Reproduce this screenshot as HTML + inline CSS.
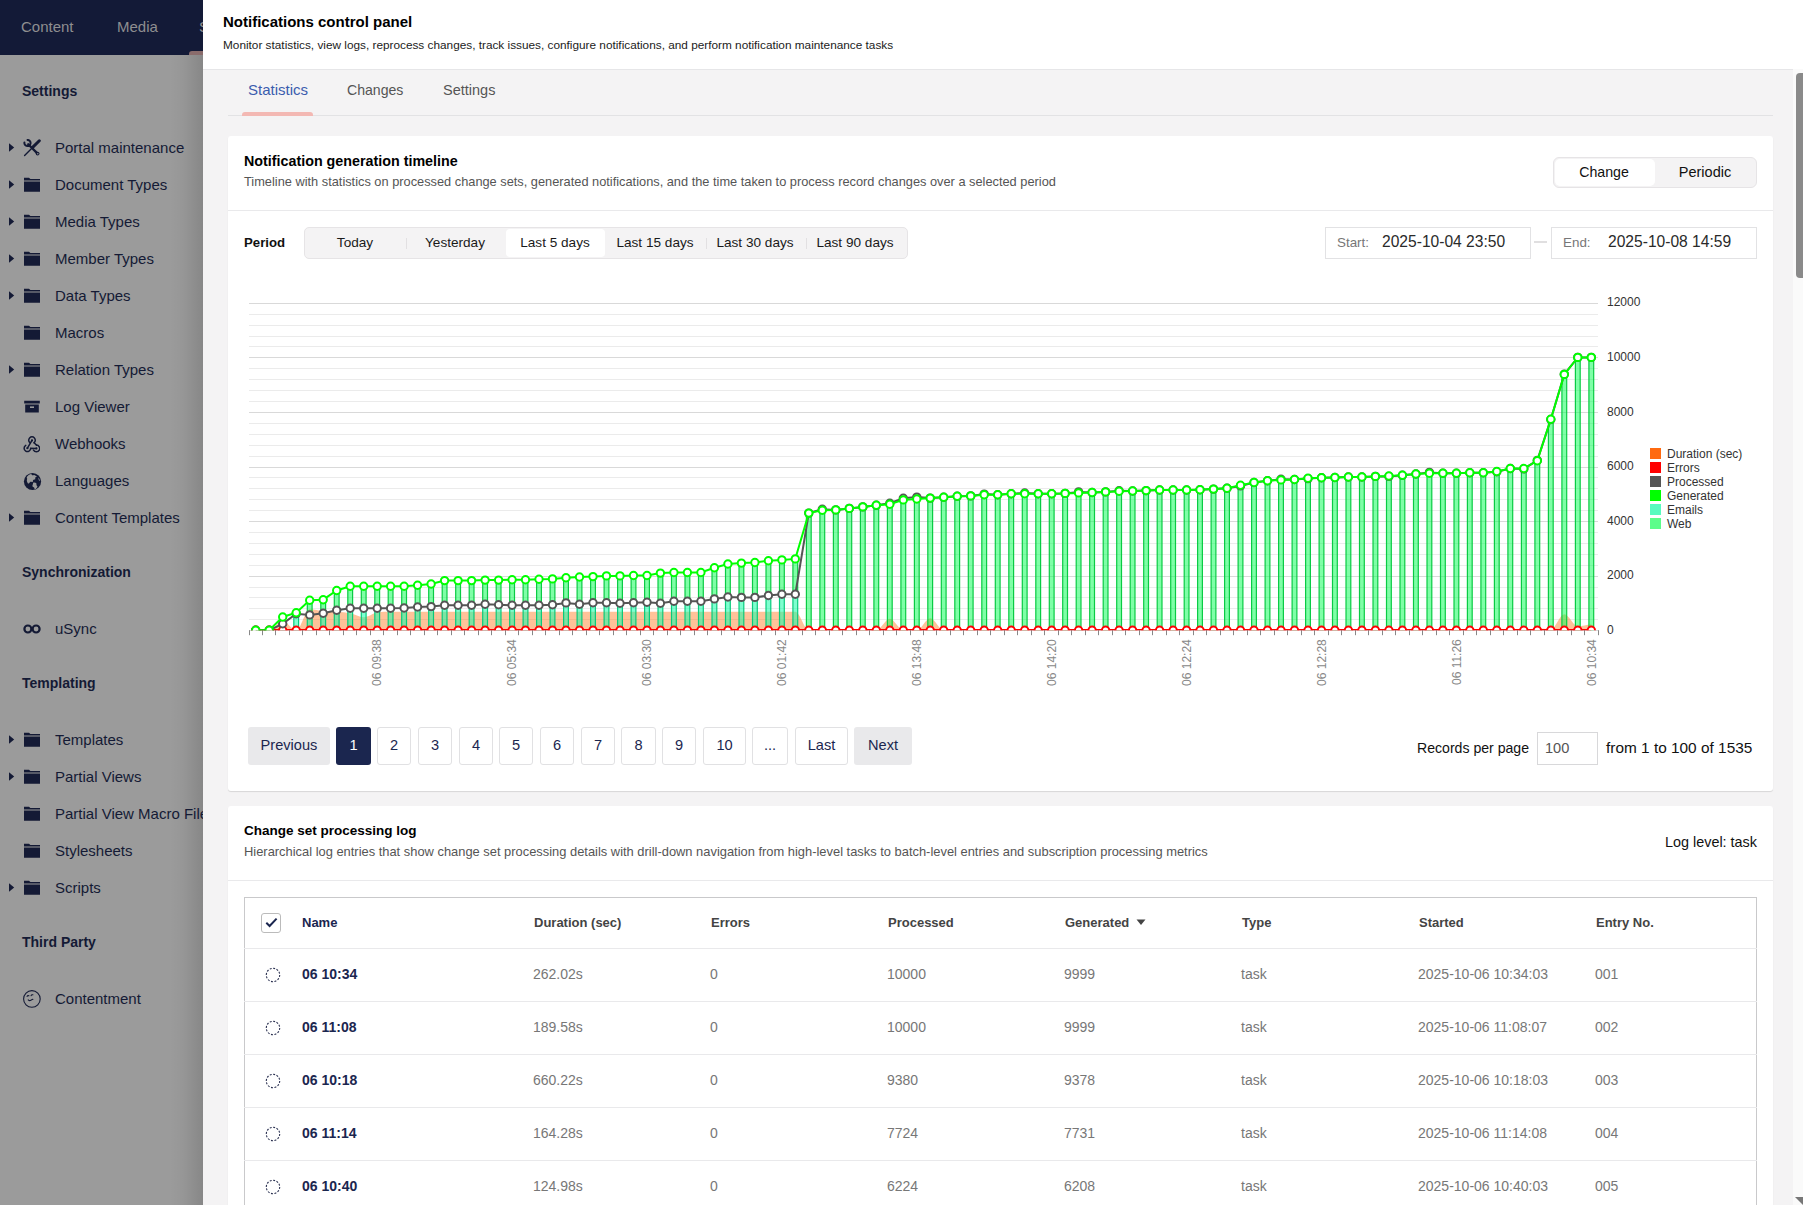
<!DOCTYPE html>
<html><head><meta charset="utf-8"><title>Notifications control panel</title>
<style>html,body{margin:0;padding:0;}body{width:1803px;height:1205px;overflow:hidden;position:relative;font-family:"Liberation Sans", sans-serif;background:#f4f3f4}</style>
</head><body>
<div style="position:absolute;left:0;top:0;width:203px;height:1205px;overflow:hidden"><div style="position:absolute;left:0px;top:0px;width:203px;height:1205px;background:#9b9b9b"></div><div style="position:absolute;left:170px;top:55px;width:33px;height:1150px;background:linear-gradient(to right, rgba(0,0,0,0) 0%, rgba(0,0,0,0.03) 40%, rgba(0,0,0,0.13) 100%)"></div><div style="position:absolute;left:0px;top:0px;width:203px;height:55px;background:#131a37"></div><div style="position:absolute;left:21px;top:17.0px;height:20px;line-height:20px;font-size:15px;color:#8e8e90;font-weight:400;white-space:nowrap;">Content</div><div style="position:absolute;left:117px;top:17.0px;height:20px;line-height:20px;font-size:15px;color:#8e8e90;font-weight:400;white-space:nowrap;">Media</div><div style="position:absolute;left:199px;top:17.0px;height:20px;line-height:20px;font-size:15px;color:#8e8e90;font-weight:400;white-space:nowrap;">Settings</div><div style="position:absolute;left:189px;top:51px;width:31px;height:4px;background:#8a6c6c;border-radius:3px 3px 0 0"></div><div style="position:absolute;left:22px;top:82.0px;height:18px;line-height:18px;font-size:14px;color:#141a35;font-weight:700;white-space:nowrap;">Settings</div><svg style="position:absolute;left:9px;top:142.5px" width="6" height="9"><path d="M0,0.3L5.2,4.5L0,8.7Z" fill="#141a35"/></svg><svg style="position:absolute;left:23px;top:139px" width="18" height="18" viewBox="0 0 18 18"><g stroke="#141a35" stroke-linecap="round" fill="none"><path d="M16.3,1.8L9.6,8.4" stroke-width="3"/><path d="M9.6,8.4L1.6,16.4" stroke-width="1.4"/><path d="M5.2,5.2L14.4,14.4" stroke-width="2.3"/><path d="M1.4,3.6A3.1,3.1 0 1 0 4.6,0.9" stroke-width="2"/></g><circle cx="14.6" cy="14.6" r="1.9" fill="#141a35"/><circle cx="14.8" cy="14.8" r="0.7" fill="#9b9b9b"/></svg><div style="position:absolute;left:55px;top:138.0px;height:20px;line-height:20px;font-size:15px;color:#141a35;font-weight:400;white-space:nowrap;">Portal maintenance</div><svg style="position:absolute;left:9px;top:179.5px" width="6" height="9"><path d="M0,0.3L5.2,4.5L0,8.7Z" fill="#141a35"/></svg><svg style="position:absolute;left:23px;top:177px" width="18" height="16" viewBox="0 0 18 16"><path d="M1,0.8h5l1.4,1.2h9.6v1.4H1z M1,4.6h16v10.2H1z" fill="#141a35"/></svg><div style="position:absolute;left:55px;top:175.0px;height:20px;line-height:20px;font-size:15px;color:#141a35;font-weight:400;white-space:nowrap;">Document Types</div><svg style="position:absolute;left:9px;top:216.5px" width="6" height="9"><path d="M0,0.3L5.2,4.5L0,8.7Z" fill="#141a35"/></svg><svg style="position:absolute;left:23px;top:214px" width="18" height="16" viewBox="0 0 18 16"><path d="M1,0.8h5l1.4,1.2h9.6v1.4H1z M1,4.6h16v10.2H1z" fill="#141a35"/></svg><div style="position:absolute;left:55px;top:212.0px;height:20px;line-height:20px;font-size:15px;color:#141a35;font-weight:400;white-space:nowrap;">Media Types</div><svg style="position:absolute;left:9px;top:253.5px" width="6" height="9"><path d="M0,0.3L5.2,4.5L0,8.7Z" fill="#141a35"/></svg><svg style="position:absolute;left:23px;top:251px" width="18" height="16" viewBox="0 0 18 16"><path d="M1,0.8h5l1.4,1.2h9.6v1.4H1z M1,4.6h16v10.2H1z" fill="#141a35"/></svg><div style="position:absolute;left:55px;top:249.0px;height:20px;line-height:20px;font-size:15px;color:#141a35;font-weight:400;white-space:nowrap;">Member Types</div><svg style="position:absolute;left:9px;top:290.5px" width="6" height="9"><path d="M0,0.3L5.2,4.5L0,8.7Z" fill="#141a35"/></svg><svg style="position:absolute;left:23px;top:288px" width="18" height="16" viewBox="0 0 18 16"><path d="M1,0.8h5l1.4,1.2h9.6v1.4H1z M1,4.6h16v10.2H1z" fill="#141a35"/></svg><div style="position:absolute;left:55px;top:286.0px;height:20px;line-height:20px;font-size:15px;color:#141a35;font-weight:400;white-space:nowrap;">Data Types</div><svg style="position:absolute;left:23px;top:325px" width="18" height="16" viewBox="0 0 18 16"><path d="M1,0.8h5l1.4,1.2h9.6v1.4H1z M1,4.6h16v10.2H1z" fill="#141a35"/></svg><div style="position:absolute;left:55px;top:323.0px;height:20px;line-height:20px;font-size:15px;color:#141a35;font-weight:400;white-space:nowrap;">Macros</div><svg style="position:absolute;left:9px;top:364.5px" width="6" height="9"><path d="M0,0.3L5.2,4.5L0,8.7Z" fill="#141a35"/></svg><svg style="position:absolute;left:23px;top:362px" width="18" height="16" viewBox="0 0 18 16"><path d="M1,0.8h5l1.4,1.2h9.6v1.4H1z M1,4.6h16v10.2H1z" fill="#141a35"/></svg><div style="position:absolute;left:55px;top:360.0px;height:20px;line-height:20px;font-size:15px;color:#141a35;font-weight:400;white-space:nowrap;">Relation Types</div><svg style="position:absolute;left:23px;top:399px" width="18" height="16" viewBox="0 0 18 16"><path d="M1.2,1.8h15.6v2.8H1.2z M2.2,5.6h13.6v7.8H2.2z" fill="#141a35"/><rect x="7" y="7.4" width="4" height="1.6" fill="#9b9b9b"/></svg><div style="position:absolute;left:55px;top:397.0px;height:20px;line-height:20px;font-size:15px;color:#141a35;font-weight:400;white-space:nowrap;">Log Viewer</div><svg style="position:absolute;left:22px;top:435.5px" width="18" height="18" viewBox="0 0 18 18"><g fill="none" stroke="#141a35" stroke-width="1.5" stroke-linecap="round"><path d="M12.1,6.7A3.3,3.3 0 1 0 7.9,6.7"/><path d="M10,4.4L5.4,12.2"/><path d="M12.1,6.7L14.4,9.1"/><path d="M3.75,9.34A3.3,3.3 0 1 0 8.7,12.2L14.4,12.4"/><path d="M14.4,9.1A3.3,3.3 0 1 1 11.54,14.05"/></g><circle cx="10" cy="4.4" r="1.1" fill="#141a35"/><circle cx="5.4" cy="12.2" r="1.1" fill="#141a35"/><circle cx="14.4" cy="12.4" r="1.1" fill="#141a35"/></svg><div style="position:absolute;left:55px;top:434.0px;height:20px;line-height:20px;font-size:15px;color:#141a35;font-weight:400;white-space:nowrap;">Webhooks</div><svg style="position:absolute;left:22.5px;top:472px" width="19" height="19" viewBox="0 0 19 19"><circle cx="9.5" cy="9.5" r="8.6" fill="#141a35"/><path d="M4.2,4.4c1.2,-1.2 2.6,-2 4,-2.3c0.6,0.3 0.4,1 1,1.2c0.8,0.1 1.2,-0.5 2,-0.4c1,0.4 2,0.9 2.7,1.7c-0.4,0.6 -1.2,0.4 -1.6,0.9c-0.4,0.5 0.3,1.2 -0.1,1.8c-0.5,0.6 -1.4,0.1 -2,0.6c-0.6,0.5 0.1,1.4 -0.5,1.9c-0.7,0.5 -1.8,-0.2 -2.6,0.2c-0.8,0.4 -0.6,1.5 -1.4,1.6c-0.9,0.1 -1.3,-1 -1.6,-1.8c-0.4,-1.1 -0.3,-2.2 0.1,-3c-0.5,-0.7 -0.6,-1.6 0,-2.4z M10.5,10.6c0.9,-0.4 2,-0.1 2.6,0.5c0.6,0.6 0.2,1.5 0.5,2.2c0.2,0.6 0.9,0.8 0.8,1.5c-0.5,1.1 -1.4,2.2 -2.6,2.8c-0.4,-0.6 -0.2,-1.5 -0.7,-2c-0.5,-0.6 -1.4,-0.6 -1.6,-1.4c-0.2,-0.8 0.2,-1.6 0.5,-2.3c0.1,-0.5 0,-1 0.5,-1.3z M15.6,5.6c0.7,1 1.2,2.2 1.3,3.4c-0.5,0 -1,-0.4 -1.1,-0.9c-0.2,-0.8 -0.5,-1.6 -0.2,-2.5z" fill="#9b9b9b"/></svg><div style="position:absolute;left:55px;top:471.0px;height:20px;line-height:20px;font-size:15px;color:#141a35;font-weight:400;white-space:nowrap;">Languages</div><svg style="position:absolute;left:9px;top:512.5px" width="6" height="9"><path d="M0,0.3L5.2,4.5L0,8.7Z" fill="#141a35"/></svg><svg style="position:absolute;left:23px;top:510px" width="18" height="16" viewBox="0 0 18 16"><path d="M1,0.8h5l1.4,1.2h9.6v1.4H1z M1,4.6h16v10.2H1z" fill="#141a35"/></svg><div style="position:absolute;left:55px;top:508.0px;height:20px;line-height:20px;font-size:15px;color:#141a35;font-weight:400;white-space:nowrap;">Content Templates</div><svg style="position:absolute;left:9px;top:734.5px" width="6" height="9"><path d="M0,0.3L5.2,4.5L0,8.7Z" fill="#141a35"/></svg><svg style="position:absolute;left:23px;top:732px" width="18" height="16" viewBox="0 0 18 16"><path d="M1,0.8h5l1.4,1.2h9.6v1.4H1z M1,4.6h16v10.2H1z" fill="#141a35"/></svg><div style="position:absolute;left:55px;top:730.0px;height:20px;line-height:20px;font-size:15px;color:#141a35;font-weight:400;white-space:nowrap;">Templates</div><svg style="position:absolute;left:9px;top:771.5px" width="6" height="9"><path d="M0,0.3L5.2,4.5L0,8.7Z" fill="#141a35"/></svg><svg style="position:absolute;left:23px;top:769px" width="18" height="16" viewBox="0 0 18 16"><path d="M1,0.8h5l1.4,1.2h9.6v1.4H1z M1,4.6h16v10.2H1z" fill="#141a35"/></svg><div style="position:absolute;left:55px;top:767.0px;height:20px;line-height:20px;font-size:15px;color:#141a35;font-weight:400;white-space:nowrap;">Partial Views</div><svg style="position:absolute;left:23px;top:806px" width="18" height="16" viewBox="0 0 18 16"><path d="M1,0.8h5l1.4,1.2h9.6v1.4H1z M1,4.6h16v10.2H1z" fill="#141a35"/></svg><div style="position:absolute;left:55px;top:804.0px;height:20px;line-height:20px;font-size:15px;color:#141a35;font-weight:400;white-space:nowrap;">Partial View Macro Files</div><svg style="position:absolute;left:23px;top:843px" width="18" height="16" viewBox="0 0 18 16"><path d="M1,0.8h5l1.4,1.2h9.6v1.4H1z M1,4.6h16v10.2H1z" fill="#141a35"/></svg><div style="position:absolute;left:55px;top:841.0px;height:20px;line-height:20px;font-size:15px;color:#141a35;font-weight:400;white-space:nowrap;">Stylesheets</div><svg style="position:absolute;left:9px;top:882.5px" width="6" height="9"><path d="M0,0.3L5.2,4.5L0,8.7Z" fill="#141a35"/></svg><svg style="position:absolute;left:23px;top:880px" width="18" height="16" viewBox="0 0 18 16"><path d="M1,0.8h5l1.4,1.2h9.6v1.4H1z M1,4.6h16v10.2H1z" fill="#141a35"/></svg><div style="position:absolute;left:55px;top:878.0px;height:20px;line-height:20px;font-size:15px;color:#141a35;font-weight:400;white-space:nowrap;">Scripts</div><div style="position:absolute;left:22px;top:563.0px;height:18px;line-height:18px;font-size:14px;color:#141a35;font-weight:700;white-space:nowrap;">Synchronization</div><svg style="position:absolute;left:22px;top:622.8px" width="20" height="12" viewBox="0 0 20 12"><g fill="none" stroke="#141a35" stroke-width="2.2"><circle cx="5.9" cy="6" r="3.5"/><circle cx="14.1" cy="6" r="3.5"/></g></svg><div style="position:absolute;left:55px;top:619.0px;height:20px;line-height:20px;font-size:15px;color:#141a35;font-weight:400;white-space:nowrap;">uSync</div><div style="position:absolute;left:22px;top:674.0px;height:18px;line-height:18px;font-size:14px;color:#141a35;font-weight:700;white-space:nowrap;">Templating</div><div style="position:absolute;left:22px;top:933.0px;height:18px;line-height:18px;font-size:14px;color:#141a35;font-weight:700;white-space:nowrap;">Third Party</div><svg style="position:absolute;left:23px;top:990px" width="18" height="18" viewBox="0 0 18 18"><g fill="none" stroke="#141a35" stroke-width="1.1" stroke-linecap="round"><circle cx="8.9" cy="8.9" r="8.3"/><path d="M5.2,9.8c0.8,0.8 1.6,1.1 2.3,0.6c0.7,-0.3 1.4,-0.8 2.4,-1.1"/><path d="M4.1,6.4c0.3,-0.7 1,-0.9 1.8,-0.6"/><path d="M8.1,5.6c0.2,-0.7 0.9,-1 1.8,-0.8"/></g></svg><div style="position:absolute;left:55px;top:989.0px;height:20px;line-height:20px;font-size:15px;color:#141a35;font-weight:400;white-space:nowrap;">Contentment</div></div>
<div style="position:absolute;left:203px;top:0px;width:1600px;height:1205px;background:#f4f3f4"></div><div style="position:absolute;left:203px;top:0px;width:1600px;height:69px;background:#fff;border-bottom:1px solid #e6e6e8"></div><div style="position:absolute;left:223px;top:11.6px;height:20px;line-height:20px;font-size:15px;color:#000;font-weight:700;white-space:nowrap;">Notifications control panel</div><div style="position:absolute;left:223px;top:37.5px;height:15px;line-height:15px;font-size:11.8px;color:#1b1b1b;font-weight:400;white-space:nowrap;">Monitor statistics, view logs, reprocess changes, track issues, configure notifications, and perform notification maintenance tasks</div><div style="position:absolute;left:248px;top:80.0px;height:20px;line-height:20px;font-size:15px;color:#3b5cae;font-weight:400;white-space:nowrap;">Statistics</div><div style="position:absolute;left:347px;top:81.0px;height:18px;line-height:18px;font-size:14.1px;color:#555;font-weight:400;white-space:nowrap;">Changes</div><div style="position:absolute;left:443px;top:80.5px;height:19px;line-height:19px;font-size:14.5px;color:#555;font-weight:400;white-space:nowrap;">Settings</div><div style="position:absolute;left:228px;top:115px;width:1545px;height:1px;background:#e2e2e4"></div><div style="position:absolute;left:242px;top:112px;width:71px;height:4px;background:#f3b8b3;border-radius:3px 3px 0 0"></div><div style="position:absolute;left:228px;top:136px;width:1545px;height:655px;background:#fff;border-radius:3px;box-shadow:0 1px 1px rgba(0,0,0,0.12)"></div><div style="position:absolute;left:244px;top:151.5px;height:19px;line-height:19px;font-size:14.3px;color:#000;font-weight:700;white-space:nowrap;">Notification generation timeline</div><div style="position:absolute;left:244px;top:172.5px;height:17px;line-height:17px;font-size:12.8px;color:#555;font-weight:400;white-space:nowrap;">Timeline with statistics on processed change sets, generated notifications, and the time taken to process record changes over a selected period</div><div style="position:absolute;left:228px;top:210px;width:1545px;height:1px;background:#e9e9eb"></div><div style="position:absolute;left:1553px;top:157px;width:204px;height:31px;background:#f4f3f4;border:1px solid #e6e4e6;border-radius:6px;box-sizing:border-box"></div><div style="position:absolute;left:1555px;top:159px;width:100px;height:27px;background:#fff;border-radius:5px"></div><div style="position:absolute;left:1604px;transform:translateX(-50%);top:163.0px;height:18px;line-height:18px;font-size:14.2px;color:#111;font-weight:400;white-space:nowrap;">Change</div><div style="position:absolute;left:1705px;transform:translateX(-50%);top:162.5px;height:19px;line-height:19px;font-size:14.5px;color:#111;font-weight:400;white-space:nowrap;">Periodic</div><div style="position:absolute;left:244px;top:233.5px;height:17px;line-height:17px;font-size:13.2px;color:#111;font-weight:700;white-space:nowrap;">Period</div><div style="position:absolute;left:304px;top:227px;width:604px;height:32px;background:#f4f3f4;border:1px solid #e6e4e6;border-radius:5px;box-sizing:border-box"></div><div style="position:absolute;left:506px;top:229px;width:99px;height:28px;background:#fff;border-radius:4px"></div><div style="position:absolute;left:355px;transform:translateX(-50%);top:233.8px;height:18px;line-height:18px;font-size:13.6px;color:#1a1a1a;font-weight:400;white-space:nowrap;">Today</div><div style="position:absolute;left:455px;transform:translateX(-50%);top:233.8px;height:18px;line-height:18px;font-size:13.6px;color:#1a1a1a;font-weight:400;white-space:nowrap;">Yesterday</div><div style="position:absolute;left:555px;transform:translateX(-50%);top:233.8px;height:18px;line-height:18px;font-size:13.6px;color:#1a1a1a;font-weight:400;white-space:nowrap;">Last 5 days</div><div style="position:absolute;left:655px;transform:translateX(-50%);top:233.8px;height:18px;line-height:18px;font-size:13.6px;color:#1a1a1a;font-weight:400;white-space:nowrap;">Last 15 days</div><div style="position:absolute;left:755px;transform:translateX(-50%);top:233.8px;height:18px;line-height:18px;font-size:13.6px;color:#1a1a1a;font-weight:400;white-space:nowrap;">Last 30 days</div><div style="position:absolute;left:855px;transform:translateX(-50%);top:233.8px;height:18px;line-height:18px;font-size:13.6px;color:#1a1a1a;font-weight:400;white-space:nowrap;">Last 90 days</div><div style="position:absolute;left:406px;top:238px;width:1px;height:11px;background:#e2e0e2"></div><div style="position:absolute;left:706px;top:238px;width:1px;height:11px;background:#e2e0e2"></div><div style="position:absolute;left:806px;top:238px;width:1px;height:11px;background:#e2e0e2"></div><div style="position:absolute;left:1325px;top:227px;width:206px;height:32px;background:#fff;border:1px solid #e2e2e4;box-sizing:border-box"></div><div style="position:absolute;left:1337px;top:233.5px;height:17px;line-height:17px;font-size:13.4px;color:#777;font-weight:400;white-space:nowrap;">Start:</div><div style="position:absolute;left:1382px;top:232.0px;height:20px;line-height:20px;font-size:15.6px;color:#2a2a2a;font-weight:400;white-space:nowrap;">2025-10-04 23:50</div><div style="position:absolute;left:1534px;top:241px;width:13px;height:2px;background:#e0dfe0"></div><div style="position:absolute;left:1551px;top:227px;width:206px;height:32px;background:#fff;border:1px solid #e2e2e4;box-sizing:border-box"></div><div style="position:absolute;left:1563px;top:233.5px;height:17px;line-height:17px;font-size:13.4px;color:#777;font-weight:400;white-space:nowrap;">End:</div><div style="position:absolute;left:1608px;top:232.0px;height:20px;line-height:20px;font-size:15.6px;color:#2a2a2a;font-weight:400;white-space:nowrap;">2025-10-08 14:59</div><svg width="1803" height="1205" viewBox="0 0 1803 1205" style="position:absolute;left:0;top:0">
<line x1="249.0" x2="1598.0" y1="630.5" y2="630.5" stroke="#d9d9d9" stroke-width="1"/>
<line x1="249.0" x2="1598.0" y1="619.5" y2="619.5" stroke="#ebebeb" stroke-width="1"/>
<line x1="249.0" x2="1598.0" y1="608.5" y2="608.5" stroke="#ebebeb" stroke-width="1"/>
<line x1="249.0" x2="1598.0" y1="597.5" y2="597.5" stroke="#ebebeb" stroke-width="1"/>
<line x1="249.0" x2="1598.0" y1="587.5" y2="587.5" stroke="#ebebeb" stroke-width="1"/>
<line x1="249.0" x2="1598.0" y1="576.5" y2="576.5" stroke="#d9d9d9" stroke-width="1"/>
<line x1="249.0" x2="1598.0" y1="565.5" y2="565.5" stroke="#ebebeb" stroke-width="1"/>
<line x1="249.0" x2="1598.0" y1="554.5" y2="554.5" stroke="#ebebeb" stroke-width="1"/>
<line x1="249.0" x2="1598.0" y1="543.5" y2="543.5" stroke="#ebebeb" stroke-width="1"/>
<line x1="249.0" x2="1598.0" y1="532.5" y2="532.5" stroke="#ebebeb" stroke-width="1"/>
<line x1="249.0" x2="1598.0" y1="521.5" y2="521.5" stroke="#d9d9d9" stroke-width="1"/>
<line x1="249.0" x2="1598.0" y1="510.5" y2="510.5" stroke="#ebebeb" stroke-width="1"/>
<line x1="249.0" x2="1598.0" y1="499.5" y2="499.5" stroke="#ebebeb" stroke-width="1"/>
<line x1="249.0" x2="1598.0" y1="488.5" y2="488.5" stroke="#ebebeb" stroke-width="1"/>
<line x1="249.0" x2="1598.0" y1="477.5" y2="477.5" stroke="#ebebeb" stroke-width="1"/>
<line x1="249.0" x2="1598.0" y1="467.5" y2="467.5" stroke="#d9d9d9" stroke-width="1"/>
<line x1="249.0" x2="1598.0" y1="456.5" y2="456.5" stroke="#ebebeb" stroke-width="1"/>
<line x1="249.0" x2="1598.0" y1="445.5" y2="445.5" stroke="#ebebeb" stroke-width="1"/>
<line x1="249.0" x2="1598.0" y1="434.5" y2="434.5" stroke="#ebebeb" stroke-width="1"/>
<line x1="249.0" x2="1598.0" y1="423.5" y2="423.5" stroke="#ebebeb" stroke-width="1"/>
<line x1="249.0" x2="1598.0" y1="412.5" y2="412.5" stroke="#d9d9d9" stroke-width="1"/>
<line x1="249.0" x2="1598.0" y1="401.5" y2="401.5" stroke="#ebebeb" stroke-width="1"/>
<line x1="249.0" x2="1598.0" y1="390.5" y2="390.5" stroke="#ebebeb" stroke-width="1"/>
<line x1="249.0" x2="1598.0" y1="379.5" y2="379.5" stroke="#ebebeb" stroke-width="1"/>
<line x1="249.0" x2="1598.0" y1="368.5" y2="368.5" stroke="#ebebeb" stroke-width="1"/>
<line x1="249.0" x2="1598.0" y1="357.5" y2="357.5" stroke="#d9d9d9" stroke-width="1"/>
<line x1="249.0" x2="1598.0" y1="346.5" y2="346.5" stroke="#ebebeb" stroke-width="1"/>
<line x1="249.0" x2="1598.0" y1="336.5" y2="336.5" stroke="#ebebeb" stroke-width="1"/>
<line x1="249.0" x2="1598.0" y1="325.5" y2="325.5" stroke="#ebebeb" stroke-width="1"/>
<line x1="249.0" x2="1598.0" y1="314.5" y2="314.5" stroke="#ebebeb" stroke-width="1"/>
<line x1="249.0" x2="1598.0" y1="303.5" y2="303.5" stroke="#d9d9d9" stroke-width="1"/>
<path d="M249.5,630.2v5M262.5,630.2v5M275.5,630.2v5M289.5,630.2v5M302.5,630.2v5M316.5,630.2v5M329.5,630.2v5M343.5,630.2v5M356.5,630.2v5M370.5,630.2v5M383.5,630.2v5M397.5,630.2v5M410.5,630.2v5M424.5,630.2v5M437.5,630.2v5M451.5,630.2v5M464.5,630.2v5M478.5,630.2v5M491.5,630.2v5M505.5,630.2v5M518.5,630.2v5M532.5,630.2v5M545.5,630.2v5M559.5,630.2v5M572.5,630.2v5M586.5,630.2v5M599.5,630.2v5M613.5,630.2v5M626.5,630.2v5M640.5,630.2v5M653.5,630.2v5M667.5,630.2v5M680.5,630.2v5M694.5,630.2v5M707.5,630.2v5M721.5,630.2v5M734.5,630.2v5M748.5,630.2v5M761.5,630.2v5M775.5,630.2v5M788.5,630.2v5M802.5,630.2v5M815.5,630.2v5M829.5,630.2v5M842.5,630.2v5M856.5,630.2v5M869.5,630.2v5M883.5,630.2v5M896.5,630.2v5M910.5,630.2v5M923.5,630.2v5M936.5,630.2v5M950.5,630.2v5M963.5,630.2v5M977.5,630.2v5M990.5,630.2v5M1004.5,630.2v5M1017.5,630.2v5M1031.5,630.2v5M1044.5,630.2v5M1058.5,630.2v5M1071.5,630.2v5M1085.5,630.2v5M1098.5,630.2v5M1112.5,630.2v5M1125.5,630.2v5M1139.5,630.2v5M1152.5,630.2v5M1166.5,630.2v5M1179.5,630.2v5M1193.5,630.2v5M1206.5,630.2v5M1220.5,630.2v5M1233.5,630.2v5M1247.5,630.2v5M1260.5,630.2v5M1274.5,630.2v5M1287.5,630.2v5M1301.5,630.2v5M1314.5,630.2v5M1328.5,630.2v5M1341.5,630.2v5M1355.5,630.2v5M1368.5,630.2v5M1382.5,630.2v5M1395.5,630.2v5M1409.5,630.2v5M1422.5,630.2v5M1436.5,630.2v5M1449.5,630.2v5M1463.5,630.2v5M1476.5,630.2v5M1490.5,630.2v5M1503.5,630.2v5M1517.5,630.2v5M1530.5,630.2v5M1544.5,630.2v5M1557.5,630.2v5M1571.5,630.2v5M1584.5,630.2v5M1598.5,630.2v5" stroke="#888" stroke-width="1" fill="none"/>
<defs><clipPath id="ca"><rect x="243.0" y="250" width="1361.0" height="380.2"/></clipPath></defs>
<g clip-path="url(#ca)">
<path d="M255.7,630.2C260.2,630.2 264.7,630.2 269.2,630.2C273.7,630.2 278.2,621.2 282.7,621.2C287.2,621.2 291.7,630.2 296.2,630.2C300.7,630.2 305.2,609.2 309.7,609.2C314.2,609.2 318.7,610.8 323.2,611.2C327.7,611.6 332.2,611.4 336.7,611.7C341.2,612.0 345.7,612.3 350.2,613.2C354.7,614.1 359.2,617.2 363.7,617.2C368.2,617.2 372.7,613.3 377.2,612.5C381.7,611.7 386.1,611.7 390.6,611.7C395.1,611.7 399.6,611.7 404.1,611.7C408.6,611.7 413.1,611.7 417.6,611.7C422.1,611.7 426.6,611.7 431.1,611.7C435.6,611.7 440.1,611.7 444.6,611.7C449.1,611.7 453.6,611.7 458.1,611.7C462.6,611.7 467.1,611.7 471.6,611.7C476.1,611.7 480.6,611.7 485.1,611.7C489.6,611.7 494.1,611.7 498.6,611.7C503.1,611.7 507.6,611.7 512.1,611.7C516.6,611.7 521.0,611.7 525.5,611.7C530.0,611.7 534.5,611.7 539.0,611.7C543.5,611.7 548.0,611.7 552.5,611.7C557.0,611.7 561.5,611.7 566.0,611.7C570.5,611.7 575.0,611.7 579.5,611.7C584.0,611.7 588.5,611.7 593.0,611.7C597.5,611.7 602.0,611.7 606.5,611.7C611.0,611.7 615.5,611.7 620.0,611.7C624.5,611.7 629.0,611.7 633.5,611.7C638.0,611.7 642.5,611.7 647.0,611.7C651.5,611.7 655.9,611.7 660.4,611.7C664.9,611.7 669.4,611.7 673.9,611.7C678.4,611.7 682.9,611.7 687.4,611.7C691.9,611.7 696.4,611.7 700.9,611.7C705.4,611.7 709.9,611.7 714.4,611.7C718.9,611.7 723.4,611.7 727.9,611.7C732.4,611.7 736.9,611.7 741.4,611.7C745.9,611.7 750.4,611.7 754.9,611.7C759.4,611.7 763.9,611.7 768.4,611.7C772.9,611.7 777.4,611.7 781.9,611.7C786.4,611.7 790.8,611.7 795.3,611.7C799.8,611.7 804.3,630.2 808.8,630.2C813.3,630.2 817.8,630.2 822.3,630.2C826.8,630.2 831.3,630.2 835.8,630.2C840.3,630.2 844.8,630.2 849.3,630.2C853.8,630.2 858.3,630.2 862.8,630.2C867.3,630.2 871.8,630.2 876.3,630.2C880.8,630.2 885.3,618.7 889.8,618.7C894.3,618.7 898.8,630.2 903.3,630.2C907.8,630.2 912.3,630.2 916.8,630.2C921.3,630.2 925.7,618.2 930.2,618.2C934.7,618.2 939.2,630.2 943.7,630.2C948.2,630.2 952.7,630.2 957.2,630.2C961.7,630.2 966.2,630.2 970.7,630.2C975.2,630.2 979.7,630.2 984.2,630.2C988.7,630.2 993.2,630.2 997.7,630.2C1002.2,630.2 1006.7,630.2 1011.2,630.2C1015.7,630.2 1020.2,630.2 1024.7,630.2C1029.2,630.2 1033.7,630.2 1038.2,630.2C1042.7,630.2 1047.2,630.2 1051.7,630.2C1056.2,630.2 1060.6,630.2 1065.1,630.2C1069.6,630.2 1074.1,630.2 1078.6,630.2C1083.1,630.2 1087.6,630.2 1092.1,630.2C1096.6,630.2 1101.1,630.2 1105.6,630.2C1110.1,630.2 1114.6,630.2 1119.1,630.2C1123.6,630.2 1128.1,630.2 1132.6,630.2C1137.1,630.2 1141.6,630.2 1146.1,630.2C1150.6,630.2 1155.1,630.2 1159.6,630.2C1164.1,630.2 1168.6,630.2 1173.1,630.2C1177.6,630.2 1182.1,630.2 1186.6,630.2C1191.1,630.2 1195.5,630.2 1200.0,630.2C1204.5,630.2 1209.0,630.2 1213.5,630.2C1218.0,630.2 1222.5,630.2 1227.0,630.2C1231.5,630.2 1236.0,630.2 1240.5,630.2C1245.0,630.2 1249.5,630.2 1254.0,630.2C1258.5,630.2 1263.0,630.2 1267.5,630.2C1272.0,630.2 1276.5,630.2 1281.0,630.2C1285.5,630.2 1290.0,630.2 1294.5,630.2C1299.0,630.2 1303.5,630.2 1308.0,630.2C1312.5,630.2 1317.0,630.2 1321.5,630.2C1326.0,630.2 1330.4,630.2 1334.9,630.2C1339.4,630.2 1343.9,630.2 1348.4,630.2C1352.9,630.2 1357.4,630.2 1361.9,630.2C1366.4,630.2 1370.9,630.2 1375.4,630.2C1379.9,630.2 1384.4,630.2 1388.9,630.2C1393.4,630.2 1397.9,630.2 1402.4,630.2C1406.9,630.2 1411.4,630.2 1415.9,630.2C1420.4,630.2 1424.9,630.2 1429.4,630.2C1433.9,630.2 1438.4,630.2 1442.9,630.2C1447.4,630.2 1451.9,630.2 1456.4,630.2C1460.9,630.2 1465.3,630.2 1469.8,630.2C1474.3,630.2 1478.8,630.2 1483.3,630.2C1487.8,630.2 1492.3,630.2 1496.8,630.2C1501.3,630.2 1505.8,630.2 1510.3,630.2C1514.8,630.2 1519.3,630.2 1523.8,630.2C1528.3,630.2 1532.8,628.2 1537.3,628.2C1541.8,628.2 1546.3,629.2 1550.8,629.2C1555.3,629.2 1559.8,614.2 1564.3,614.2C1568.8,614.2 1573.3,626.2 1577.8,626.2C1582.3,626.2 1586.8,624.9 1591.3,624.2L1591.3,630.2L255.7,630.2Z" fill="rgba(255,102,0,0.4)" stroke="none"/>
<g fill="rgba(0,255,80,0.5)" stroke="rgba(0,200,60,0.95)" stroke-width="1.2"><rect x="280.3" y="617.0" width="4.8" height="6.8"/><rect x="293.8" y="612.7" width="4.8" height="1.1"/><rect x="307.3" y="600.2" width="4.8" height="14.7"/><rect x="320.8" y="599.7" width="4.8" height="13.6"/><rect x="334.3" y="590.5" width="4.8" height="19.7"/><rect x="347.8" y="586.3" width="4.8" height="22.0"/><rect x="361.3" y="586.3" width="4.8" height="22.0"/><rect x="374.8" y="586.3" width="4.8" height="22.0"/><rect x="388.2" y="586.3" width="4.8" height="22.0"/><rect x="401.7" y="586.3" width="4.8" height="21.7"/><rect x="415.2" y="585.3" width="4.8" height="21.7"/><rect x="428.7" y="584.0" width="4.8" height="22.6"/><rect x="442.2" y="580.6" width="4.8" height="24.7"/><rect x="455.7" y="580.6" width="4.8" height="24.7"/><rect x="469.2" y="580.6" width="4.8" height="24.7"/><rect x="482.7" y="580.1" width="4.8" height="24.1"/><rect x="496.2" y="580.1" width="4.8" height="24.7"/><rect x="509.7" y="579.7" width="4.8" height="25.6"/><rect x="523.1" y="579.7" width="4.8" height="25.6"/><rect x="536.6" y="579.3" width="4.8" height="26.0"/><rect x="550.1" y="578.9" width="4.8" height="25.8"/><rect x="563.6" y="577.8" width="4.8" height="25.1"/><rect x="577.1" y="577.0" width="4.8" height="27.1"/><rect x="590.6" y="576.6" width="4.8" height="26.0"/><rect x="604.1" y="575.9" width="4.8" height="26.8"/><rect x="617.6" y="575.9" width="4.8" height="27.3"/><rect x="631.1" y="575.5" width="4.8" height="27.1"/><rect x="644.6" y="575.5" width="4.8" height="26.8"/><rect x="658.0" y="573.1" width="4.8" height="30.2"/><rect x="671.5" y="572.5" width="4.8" height="28.7"/><rect x="685.0" y="572.5" width="4.8" height="28.7"/><rect x="698.5" y="572.5" width="4.8" height="28.7"/><rect x="712.0" y="567.8" width="4.8" height="31.1"/><rect x="725.5" y="564.0" width="4.8" height="33.0"/><rect x="739.0" y="563.1" width="4.8" height="34.3"/><rect x="752.5" y="562.5" width="4.8" height="34.9"/><rect x="766.0" y="560.8" width="4.8" height="34.7"/><rect x="779.5" y="559.9" width="4.8" height="34.3"/><rect x="792.9" y="558.9" width="4.8" height="35.2"/><rect x="806.4" y="513.1" width="4.8" height="117.1"/><rect x="819.9" y="510.3" width="4.8" height="119.9"/><rect x="833.4" y="509.9" width="4.8" height="120.3"/><rect x="846.9" y="508.4" width="4.8" height="121.8"/><rect x="860.4" y="506.9" width="4.8" height="123.3"/><rect x="873.9" y="505.2" width="4.8" height="125.0"/><rect x="887.4" y="504.2" width="4.8" height="126.0"/><rect x="900.9" y="499.9" width="4.8" height="130.3"/><rect x="914.4" y="499.0" width="4.8" height="131.2"/><rect x="927.8" y="498.1" width="4.8" height="132.1"/><rect x="941.3" y="497.2" width="4.8" height="133.0"/><rect x="954.8" y="496.3" width="4.8" height="133.9"/><rect x="968.3" y="495.9" width="4.8" height="134.3"/><rect x="981.8" y="494.8" width="4.8" height="135.4"/><rect x="995.3" y="494.8" width="4.8" height="135.4"/><rect x="1008.8" y="493.8" width="4.8" height="136.4"/><rect x="1022.3" y="493.8" width="4.8" height="136.4"/><rect x="1035.8" y="493.8" width="4.8" height="136.4"/><rect x="1049.3" y="493.8" width="4.8" height="136.4"/><rect x="1062.7" y="493.4" width="4.8" height="136.8"/><rect x="1076.2" y="492.9" width="4.8" height="137.3"/><rect x="1089.7" y="492.5" width="4.8" height="137.7"/><rect x="1103.2" y="491.9" width="4.8" height="138.3"/><rect x="1116.7" y="491.3" width="4.8" height="138.9"/><rect x="1130.2" y="491.0" width="4.8" height="139.2"/><rect x="1143.7" y="490.6" width="4.8" height="139.6"/><rect x="1157.2" y="490.0" width="4.8" height="140.2"/><rect x="1170.7" y="490.0" width="4.8" height="140.2"/><rect x="1184.2" y="490.0" width="4.8" height="140.2"/><rect x="1197.6" y="489.7" width="4.8" height="140.5"/><rect x="1211.1" y="489.1" width="4.8" height="141.1"/><rect x="1224.6" y="488.2" width="4.8" height="142.0"/><rect x="1238.1" y="485.3" width="4.8" height="144.9"/><rect x="1251.6" y="482.5" width="4.8" height="147.7"/><rect x="1265.1" y="480.7" width="4.8" height="149.5"/><rect x="1278.6" y="479.9" width="4.8" height="150.3"/><rect x="1292.1" y="479.5" width="4.8" height="150.7"/><rect x="1305.6" y="478.2" width="4.8" height="152.0"/><rect x="1319.1" y="477.7" width="4.8" height="152.5"/><rect x="1332.5" y="477.5" width="4.8" height="152.7"/><rect x="1346.0" y="477.0" width="4.8" height="153.2"/><rect x="1359.5" y="477.0" width="4.8" height="153.2"/><rect x="1373.0" y="476.4" width="4.8" height="153.8"/><rect x="1386.5" y="476.0" width="4.8" height="154.2"/><rect x="1400.0" y="475.2" width="4.8" height="155.0"/><rect x="1413.5" y="474.0" width="4.8" height="156.2"/><rect x="1427.0" y="473.2" width="4.8" height="157.0"/><rect x="1440.5" y="473.2" width="4.8" height="157.0"/><rect x="1454.0" y="473.2" width="4.8" height="157.0"/><rect x="1467.4" y="472.7" width="4.8" height="157.5"/><rect x="1480.9" y="472.7" width="4.8" height="157.5"/><rect x="1494.4" y="471.5" width="4.8" height="158.7"/><rect x="1507.9" y="468.5" width="4.8" height="161.7"/><rect x="1521.4" y="468.5" width="4.8" height="161.7"/><rect x="1534.9" y="460.8" width="4.8" height="169.4"/><rect x="1548.4" y="419.3" width="4.8" height="210.9"/><rect x="1561.9" y="374.4" width="4.8" height="255.8"/><rect x="1575.4" y="357.4" width="4.8" height="272.8"/><rect x="1588.9" y="357.4" width="4.8" height="272.8"/></g>
<g fill="rgba(20,255,170,0.55)" stroke="rgba(0,200,120,0.95)" stroke-width="1.2"><rect x="280.3" y="623.8" width="4.8" height="6.4"/><rect x="293.8" y="613.8" width="4.8" height="16.4"/><rect x="307.3" y="614.9" width="4.8" height="15.3"/><rect x="320.8" y="613.3" width="4.8" height="16.9"/><rect x="334.3" y="610.2" width="4.8" height="20.0"/><rect x="347.8" y="608.3" width="4.8" height="21.9"/><rect x="361.3" y="608.3" width="4.8" height="21.9"/><rect x="374.8" y="608.3" width="4.8" height="21.9"/><rect x="388.2" y="608.3" width="4.8" height="21.9"/><rect x="401.7" y="608.0" width="4.8" height="22.2"/><rect x="415.2" y="607.0" width="4.8" height="23.2"/><rect x="428.7" y="606.6" width="4.8" height="23.6"/><rect x="442.2" y="605.3" width="4.8" height="24.9"/><rect x="455.7" y="605.3" width="4.8" height="24.9"/><rect x="469.2" y="605.3" width="4.8" height="24.9"/><rect x="482.7" y="604.2" width="4.8" height="26.0"/><rect x="496.2" y="604.7" width="4.8" height="25.5"/><rect x="509.7" y="605.3" width="4.8" height="24.9"/><rect x="523.1" y="605.3" width="4.8" height="24.9"/><rect x="536.6" y="605.3" width="4.8" height="24.9"/><rect x="550.1" y="604.7" width="4.8" height="25.5"/><rect x="563.6" y="602.9" width="4.8" height="27.3"/><rect x="577.1" y="604.2" width="4.8" height="26.0"/><rect x="590.6" y="602.7" width="4.8" height="27.5"/><rect x="604.1" y="602.7" width="4.8" height="27.5"/><rect x="617.6" y="603.2" width="4.8" height="27.0"/><rect x="631.1" y="602.7" width="4.8" height="27.5"/><rect x="644.6" y="602.3" width="4.8" height="27.9"/><rect x="658.0" y="603.2" width="4.8" height="27.0"/><rect x="671.5" y="601.2" width="4.8" height="29.0"/><rect x="685.0" y="601.2" width="4.8" height="29.0"/><rect x="698.5" y="601.2" width="4.8" height="29.0"/><rect x="712.0" y="598.9" width="4.8" height="31.3"/><rect x="725.5" y="597.0" width="4.8" height="33.2"/><rect x="739.0" y="597.4" width="4.8" height="32.8"/><rect x="752.5" y="597.4" width="4.8" height="32.8"/><rect x="766.0" y="595.5" width="4.8" height="34.7"/><rect x="779.5" y="594.2" width="4.8" height="36.0"/><rect x="792.9" y="594.2" width="4.8" height="36.0"/></g>
<polyline points="255.7,630.2 269.2,630.2 282.7,630.2 296.2,630.2 309.7,630.2 323.2,630.2 336.7,630.2 350.2,630.2 363.7,630.2 377.2,630.2 390.6,630.2 404.1,630.2 417.6,630.2 431.1,630.2 444.6,630.2 458.1,630.2 471.6,630.2 485.1,630.2 498.6,630.2 512.1,630.2 525.5,630.2 539.0,630.2 552.5,630.2 566.0,630.2 579.5,630.2 593.0,630.2 606.5,630.2 620.0,630.2 633.5,630.2 647.0,630.2 660.4,630.2 673.9,630.2 687.4,630.2 700.9,630.2 714.4,630.2 727.9,630.2 741.4,630.2 754.9,630.2 768.4,630.2 781.9,630.2 795.3,630.2 808.8,630.2 822.3,630.2 835.8,630.2 849.3,630.2 862.8,630.2 876.3,630.2 889.8,630.2 903.3,630.2 916.8,630.2 930.2,630.2 943.7,630.2 957.2,630.2 970.7,630.2 984.2,630.2 997.7,630.2 1011.2,630.2 1024.7,630.2 1038.2,630.2 1051.7,630.2 1065.1,630.2 1078.6,630.2 1092.1,630.2 1105.6,630.2 1119.1,630.2 1132.6,630.2 1146.1,630.2 1159.6,630.2 1173.1,630.2 1186.6,630.2 1200.0,630.2 1213.5,630.2 1227.0,630.2 1240.5,630.2 1254.0,630.2 1267.5,630.2 1281.0,630.2 1294.5,630.2 1308.0,630.2 1321.5,630.2 1334.9,630.2 1348.4,630.2 1361.9,630.2 1375.4,630.2 1388.9,630.2 1402.4,630.2 1415.9,630.2 1429.4,630.2 1442.9,630.2 1456.4,630.2 1469.8,630.2 1483.3,630.2 1496.8,630.2 1510.3,630.2 1523.8,630.2 1537.3,630.2 1550.8,630.2 1564.3,630.2 1577.8,630.2 1591.3,630.2" fill="none" stroke="#ff0000" stroke-width="2.6"/>
<g fill="#fff" stroke="#ff0000" stroke-width="2"><circle cx="255.7" cy="630.2" r="3.7"/><circle cx="269.2" cy="630.2" r="3.7"/><circle cx="282.7" cy="630.2" r="3.7"/><circle cx="296.2" cy="630.2" r="3.7"/><circle cx="309.7" cy="630.2" r="3.7"/><circle cx="323.2" cy="630.2" r="3.7"/><circle cx="336.7" cy="630.2" r="3.7"/><circle cx="350.2" cy="630.2" r="3.7"/><circle cx="363.7" cy="630.2" r="3.7"/><circle cx="377.2" cy="630.2" r="3.7"/><circle cx="390.6" cy="630.2" r="3.7"/><circle cx="404.1" cy="630.2" r="3.7"/><circle cx="417.6" cy="630.2" r="3.7"/><circle cx="431.1" cy="630.2" r="3.7"/><circle cx="444.6" cy="630.2" r="3.7"/><circle cx="458.1" cy="630.2" r="3.7"/><circle cx="471.6" cy="630.2" r="3.7"/><circle cx="485.1" cy="630.2" r="3.7"/><circle cx="498.6" cy="630.2" r="3.7"/><circle cx="512.1" cy="630.2" r="3.7"/><circle cx="525.5" cy="630.2" r="3.7"/><circle cx="539.0" cy="630.2" r="3.7"/><circle cx="552.5" cy="630.2" r="3.7"/><circle cx="566.0" cy="630.2" r="3.7"/><circle cx="579.5" cy="630.2" r="3.7"/><circle cx="593.0" cy="630.2" r="3.7"/><circle cx="606.5" cy="630.2" r="3.7"/><circle cx="620.0" cy="630.2" r="3.7"/><circle cx="633.5" cy="630.2" r="3.7"/><circle cx="647.0" cy="630.2" r="3.7"/><circle cx="660.4" cy="630.2" r="3.7"/><circle cx="673.9" cy="630.2" r="3.7"/><circle cx="687.4" cy="630.2" r="3.7"/><circle cx="700.9" cy="630.2" r="3.7"/><circle cx="714.4" cy="630.2" r="3.7"/><circle cx="727.9" cy="630.2" r="3.7"/><circle cx="741.4" cy="630.2" r="3.7"/><circle cx="754.9" cy="630.2" r="3.7"/><circle cx="768.4" cy="630.2" r="3.7"/><circle cx="781.9" cy="630.2" r="3.7"/><circle cx="795.3" cy="630.2" r="3.7"/><circle cx="808.8" cy="630.2" r="3.7"/><circle cx="822.3" cy="630.2" r="3.7"/><circle cx="835.8" cy="630.2" r="3.7"/><circle cx="849.3" cy="630.2" r="3.7"/><circle cx="862.8" cy="630.2" r="3.7"/><circle cx="876.3" cy="630.2" r="3.7"/><circle cx="889.8" cy="630.2" r="3.7"/><circle cx="903.3" cy="630.2" r="3.7"/><circle cx="916.8" cy="630.2" r="3.7"/><circle cx="930.2" cy="630.2" r="3.7"/><circle cx="943.7" cy="630.2" r="3.7"/><circle cx="957.2" cy="630.2" r="3.7"/><circle cx="970.7" cy="630.2" r="3.7"/><circle cx="984.2" cy="630.2" r="3.7"/><circle cx="997.7" cy="630.2" r="3.7"/><circle cx="1011.2" cy="630.2" r="3.7"/><circle cx="1024.7" cy="630.2" r="3.7"/><circle cx="1038.2" cy="630.2" r="3.7"/><circle cx="1051.7" cy="630.2" r="3.7"/><circle cx="1065.1" cy="630.2" r="3.7"/><circle cx="1078.6" cy="630.2" r="3.7"/><circle cx="1092.1" cy="630.2" r="3.7"/><circle cx="1105.6" cy="630.2" r="3.7"/><circle cx="1119.1" cy="630.2" r="3.7"/><circle cx="1132.6" cy="630.2" r="3.7"/><circle cx="1146.1" cy="630.2" r="3.7"/><circle cx="1159.6" cy="630.2" r="3.7"/><circle cx="1173.1" cy="630.2" r="3.7"/><circle cx="1186.6" cy="630.2" r="3.7"/><circle cx="1200.0" cy="630.2" r="3.7"/><circle cx="1213.5" cy="630.2" r="3.7"/><circle cx="1227.0" cy="630.2" r="3.7"/><circle cx="1240.5" cy="630.2" r="3.7"/><circle cx="1254.0" cy="630.2" r="3.7"/><circle cx="1267.5" cy="630.2" r="3.7"/><circle cx="1281.0" cy="630.2" r="3.7"/><circle cx="1294.5" cy="630.2" r="3.7"/><circle cx="1308.0" cy="630.2" r="3.7"/><circle cx="1321.5" cy="630.2" r="3.7"/><circle cx="1334.9" cy="630.2" r="3.7"/><circle cx="1348.4" cy="630.2" r="3.7"/><circle cx="1361.9" cy="630.2" r="3.7"/><circle cx="1375.4" cy="630.2" r="3.7"/><circle cx="1388.9" cy="630.2" r="3.7"/><circle cx="1402.4" cy="630.2" r="3.7"/><circle cx="1415.9" cy="630.2" r="3.7"/><circle cx="1429.4" cy="630.2" r="3.7"/><circle cx="1442.9" cy="630.2" r="3.7"/><circle cx="1456.4" cy="630.2" r="3.7"/><circle cx="1469.8" cy="630.2" r="3.7"/><circle cx="1483.3" cy="630.2" r="3.7"/><circle cx="1496.8" cy="630.2" r="3.7"/><circle cx="1510.3" cy="630.2" r="3.7"/><circle cx="1523.8" cy="630.2" r="3.7"/><circle cx="1537.3" cy="630.2" r="3.7"/><circle cx="1550.8" cy="630.2" r="3.7"/><circle cx="1564.3" cy="630.2" r="3.7"/><circle cx="1577.8" cy="630.2" r="3.7"/><circle cx="1591.3" cy="630.2" r="3.7"/></g>
<polyline points="255.7,630.2 269.2,630.2 282.7,623.8 296.2,613.8 309.7,614.9 323.2,613.3 336.7,610.2 350.2,608.3 363.7,608.3 377.2,608.3 390.6,608.3 404.1,608.0 417.6,607.0 431.1,606.6 444.6,605.3 458.1,605.3 471.6,605.3 485.1,604.2 498.6,604.7 512.1,605.3 525.5,605.3 539.0,605.3 552.5,604.7 566.0,602.9 579.5,604.2 593.0,602.7 606.5,602.7 620.0,603.2 633.5,602.7 647.0,602.3 660.4,603.2 673.9,601.2 687.4,601.2 700.9,601.2 714.4,598.9 727.9,597.0 741.4,597.4 754.9,597.4 768.4,595.5 781.9,594.2 795.3,594.2 808.8,513.1 822.3,509.2 835.8,509.9 849.3,508.4 862.8,506.9 876.3,505.2 889.8,503.3 903.3,498.3 916.8,497.1 930.2,498.1 943.7,497.2 957.2,496.3 970.7,495.9 984.2,494.1 997.7,494.8 1011.2,493.8 1024.7,493.0 1038.2,493.8 1051.7,493.8 1065.1,493.4 1078.6,491.9 1092.1,492.5 1105.6,491.9 1119.1,490.7 1132.6,491.0 1146.1,490.6 1159.6,490.0 1173.1,490.0 1186.6,490.0 1200.0,489.7 1213.5,489.1 1227.0,488.2 1240.5,485.9 1254.0,482.5 1267.5,480.7 1281.0,479.3 1294.5,479.5 1308.0,478.6 1321.5,477.7 1334.9,477.5 1348.4,477.0 1361.9,477.0 1375.4,476.4 1388.9,476.4 1402.4,475.2 1415.9,474.0 1429.4,472.4 1442.9,473.2 1456.4,473.2 1469.8,472.7 1483.3,472.7 1496.8,471.8 1510.3,468.5 1523.8,468.9 1537.3,460.4 1550.8,419.5 1564.3,374.3 1577.8,357.4 1591.3,357.4" fill="none" stroke="#555555" stroke-width="2"/>
<g fill="#fff" stroke="#555555" stroke-width="2"><circle cx="255.7" cy="630.2" r="3.7"/><circle cx="269.2" cy="630.2" r="3.7"/><circle cx="282.7" cy="623.8" r="3.7"/><circle cx="296.2" cy="613.8" r="3.7"/><circle cx="309.7" cy="614.9" r="3.7"/><circle cx="323.2" cy="613.3" r="3.7"/><circle cx="336.7" cy="610.2" r="3.7"/><circle cx="350.2" cy="608.3" r="3.7"/><circle cx="363.7" cy="608.3" r="3.7"/><circle cx="377.2" cy="608.3" r="3.7"/><circle cx="390.6" cy="608.3" r="3.7"/><circle cx="404.1" cy="608.0" r="3.7"/><circle cx="417.6" cy="607.0" r="3.7"/><circle cx="431.1" cy="606.6" r="3.7"/><circle cx="444.6" cy="605.3" r="3.7"/><circle cx="458.1" cy="605.3" r="3.7"/><circle cx="471.6" cy="605.3" r="3.7"/><circle cx="485.1" cy="604.2" r="3.7"/><circle cx="498.6" cy="604.7" r="3.7"/><circle cx="512.1" cy="605.3" r="3.7"/><circle cx="525.5" cy="605.3" r="3.7"/><circle cx="539.0" cy="605.3" r="3.7"/><circle cx="552.5" cy="604.7" r="3.7"/><circle cx="566.0" cy="602.9" r="3.7"/><circle cx="579.5" cy="604.2" r="3.7"/><circle cx="593.0" cy="602.7" r="3.7"/><circle cx="606.5" cy="602.7" r="3.7"/><circle cx="620.0" cy="603.2" r="3.7"/><circle cx="633.5" cy="602.7" r="3.7"/><circle cx="647.0" cy="602.3" r="3.7"/><circle cx="660.4" cy="603.2" r="3.7"/><circle cx="673.9" cy="601.2" r="3.7"/><circle cx="687.4" cy="601.2" r="3.7"/><circle cx="700.9" cy="601.2" r="3.7"/><circle cx="714.4" cy="598.9" r="3.7"/><circle cx="727.9" cy="597.0" r="3.7"/><circle cx="741.4" cy="597.4" r="3.7"/><circle cx="754.9" cy="597.4" r="3.7"/><circle cx="768.4" cy="595.5" r="3.7"/><circle cx="781.9" cy="594.2" r="3.7"/><circle cx="795.3" cy="594.2" r="3.7"/><circle cx="808.8" cy="513.1" r="3.7"/><circle cx="822.3" cy="509.2" r="3.7"/><circle cx="835.8" cy="509.9" r="3.7"/><circle cx="849.3" cy="508.4" r="3.7"/><circle cx="862.8" cy="506.9" r="3.7"/><circle cx="876.3" cy="505.2" r="3.7"/><circle cx="889.8" cy="503.3" r="3.7"/><circle cx="903.3" cy="498.3" r="3.7"/><circle cx="916.8" cy="497.1" r="3.7"/><circle cx="930.2" cy="498.1" r="3.7"/><circle cx="943.7" cy="497.2" r="3.7"/><circle cx="957.2" cy="496.3" r="3.7"/><circle cx="970.7" cy="495.9" r="3.7"/><circle cx="984.2" cy="494.1" r="3.7"/><circle cx="997.7" cy="494.8" r="3.7"/><circle cx="1011.2" cy="493.8" r="3.7"/><circle cx="1024.7" cy="493.0" r="3.7"/><circle cx="1038.2" cy="493.8" r="3.7"/><circle cx="1051.7" cy="493.8" r="3.7"/><circle cx="1065.1" cy="493.4" r="3.7"/><circle cx="1078.6" cy="491.9" r="3.7"/><circle cx="1092.1" cy="492.5" r="3.7"/><circle cx="1105.6" cy="491.9" r="3.7"/><circle cx="1119.1" cy="490.7" r="3.7"/><circle cx="1132.6" cy="491.0" r="3.7"/><circle cx="1146.1" cy="490.6" r="3.7"/><circle cx="1159.6" cy="490.0" r="3.7"/><circle cx="1173.1" cy="490.0" r="3.7"/><circle cx="1186.6" cy="490.0" r="3.7"/><circle cx="1200.0" cy="489.7" r="3.7"/><circle cx="1213.5" cy="489.1" r="3.7"/><circle cx="1227.0" cy="488.2" r="3.7"/><circle cx="1240.5" cy="485.9" r="3.7"/><circle cx="1254.0" cy="482.5" r="3.7"/><circle cx="1267.5" cy="480.7" r="3.7"/><circle cx="1281.0" cy="479.3" r="3.7"/><circle cx="1294.5" cy="479.5" r="3.7"/><circle cx="1308.0" cy="478.6" r="3.7"/><circle cx="1321.5" cy="477.7" r="3.7"/><circle cx="1334.9" cy="477.5" r="3.7"/><circle cx="1348.4" cy="477.0" r="3.7"/><circle cx="1361.9" cy="477.0" r="3.7"/><circle cx="1375.4" cy="476.4" r="3.7"/><circle cx="1388.9" cy="476.4" r="3.7"/><circle cx="1402.4" cy="475.2" r="3.7"/><circle cx="1415.9" cy="474.0" r="3.7"/><circle cx="1429.4" cy="472.4" r="3.7"/><circle cx="1442.9" cy="473.2" r="3.7"/><circle cx="1456.4" cy="473.2" r="3.7"/><circle cx="1469.8" cy="472.7" r="3.7"/><circle cx="1483.3" cy="472.7" r="3.7"/><circle cx="1496.8" cy="471.8" r="3.7"/><circle cx="1510.3" cy="468.5" r="3.7"/><circle cx="1523.8" cy="468.9" r="3.7"/><circle cx="1537.3" cy="460.4" r="3.7"/><circle cx="1550.8" cy="419.5" r="3.7"/><circle cx="1564.3" cy="374.3" r="3.7"/><circle cx="1577.8" cy="357.4" r="3.7"/><circle cx="1591.3" cy="357.4" r="3.7"/></g>
<polyline points="255.7,630.2 269.2,630.2 282.7,617.0 296.2,612.7 309.7,600.2 323.2,599.7 336.7,590.5 350.2,586.3 363.7,586.3 377.2,586.3 390.6,586.3 404.1,586.3 417.6,585.3 431.1,584.0 444.6,580.6 458.1,580.6 471.6,580.6 485.1,580.1 498.6,580.1 512.1,579.7 525.5,579.7 539.0,579.3 552.5,578.9 566.0,577.8 579.5,577.0 593.0,576.6 606.5,575.9 620.0,575.9 633.5,575.5 647.0,575.5 660.4,573.1 673.9,572.5 687.4,572.5 700.9,572.5 714.4,567.8 727.9,564.0 741.4,563.1 754.9,562.5 768.4,560.8 781.9,559.9 795.3,558.9 808.8,513.1 822.3,510.3 835.8,509.9 849.3,508.4 862.8,506.9 876.3,505.2 889.8,504.2 903.3,499.9 916.8,499.0 930.2,498.1 943.7,497.2 957.2,496.3 970.7,495.9 984.2,494.8 997.7,494.8 1011.2,493.8 1024.7,493.8 1038.2,493.8 1051.7,493.8 1065.1,493.4 1078.6,492.9 1092.1,492.5 1105.6,491.9 1119.1,491.3 1132.6,491.0 1146.1,490.6 1159.6,490.0 1173.1,490.0 1186.6,490.0 1200.0,489.7 1213.5,489.1 1227.0,488.2 1240.5,485.3 1254.0,482.5 1267.5,480.7 1281.0,479.9 1294.5,479.5 1308.0,478.2 1321.5,477.7 1334.9,477.5 1348.4,477.0 1361.9,477.0 1375.4,476.4 1388.9,476.0 1402.4,475.2 1415.9,474.0 1429.4,473.2 1442.9,473.2 1456.4,473.2 1469.8,472.7 1483.3,472.7 1496.8,471.5 1510.3,468.5 1523.8,468.5 1537.3,460.8 1550.8,419.3 1564.3,374.4 1577.8,357.4 1591.3,357.4" fill="none" stroke="#00ff00" stroke-width="2"/>
<g fill="#fff" stroke="#00ff00" stroke-width="2"><circle cx="255.7" cy="630.2" r="3.7"/><circle cx="269.2" cy="630.2" r="3.7"/><circle cx="282.7" cy="617.0" r="3.7"/><circle cx="296.2" cy="612.7" r="3.7"/><circle cx="309.7" cy="600.2" r="3.7"/><circle cx="323.2" cy="599.7" r="3.7"/><circle cx="336.7" cy="590.5" r="3.7"/><circle cx="350.2" cy="586.3" r="3.7"/><circle cx="363.7" cy="586.3" r="3.7"/><circle cx="377.2" cy="586.3" r="3.7"/><circle cx="390.6" cy="586.3" r="3.7"/><circle cx="404.1" cy="586.3" r="3.7"/><circle cx="417.6" cy="585.3" r="3.7"/><circle cx="431.1" cy="584.0" r="3.7"/><circle cx="444.6" cy="580.6" r="3.7"/><circle cx="458.1" cy="580.6" r="3.7"/><circle cx="471.6" cy="580.6" r="3.7"/><circle cx="485.1" cy="580.1" r="3.7"/><circle cx="498.6" cy="580.1" r="3.7"/><circle cx="512.1" cy="579.7" r="3.7"/><circle cx="525.5" cy="579.7" r="3.7"/><circle cx="539.0" cy="579.3" r="3.7"/><circle cx="552.5" cy="578.9" r="3.7"/><circle cx="566.0" cy="577.8" r="3.7"/><circle cx="579.5" cy="577.0" r="3.7"/><circle cx="593.0" cy="576.6" r="3.7"/><circle cx="606.5" cy="575.9" r="3.7"/><circle cx="620.0" cy="575.9" r="3.7"/><circle cx="633.5" cy="575.5" r="3.7"/><circle cx="647.0" cy="575.5" r="3.7"/><circle cx="660.4" cy="573.1" r="3.7"/><circle cx="673.9" cy="572.5" r="3.7"/><circle cx="687.4" cy="572.5" r="3.7"/><circle cx="700.9" cy="572.5" r="3.7"/><circle cx="714.4" cy="567.8" r="3.7"/><circle cx="727.9" cy="564.0" r="3.7"/><circle cx="741.4" cy="563.1" r="3.7"/><circle cx="754.9" cy="562.5" r="3.7"/><circle cx="768.4" cy="560.8" r="3.7"/><circle cx="781.9" cy="559.9" r="3.7"/><circle cx="795.3" cy="558.9" r="3.7"/><circle cx="808.8" cy="513.1" r="3.7"/><circle cx="822.3" cy="510.3" r="3.7"/><circle cx="835.8" cy="509.9" r="3.7"/><circle cx="849.3" cy="508.4" r="3.7"/><circle cx="862.8" cy="506.9" r="3.7"/><circle cx="876.3" cy="505.2" r="3.7"/><circle cx="889.8" cy="504.2" r="3.7"/><circle cx="903.3" cy="499.9" r="3.7"/><circle cx="916.8" cy="499.0" r="3.7"/><circle cx="930.2" cy="498.1" r="3.7"/><circle cx="943.7" cy="497.2" r="3.7"/><circle cx="957.2" cy="496.3" r="3.7"/><circle cx="970.7" cy="495.9" r="3.7"/><circle cx="984.2" cy="494.8" r="3.7"/><circle cx="997.7" cy="494.8" r="3.7"/><circle cx="1011.2" cy="493.8" r="3.7"/><circle cx="1024.7" cy="493.8" r="3.7"/><circle cx="1038.2" cy="493.8" r="3.7"/><circle cx="1051.7" cy="493.8" r="3.7"/><circle cx="1065.1" cy="493.4" r="3.7"/><circle cx="1078.6" cy="492.9" r="3.7"/><circle cx="1092.1" cy="492.5" r="3.7"/><circle cx="1105.6" cy="491.9" r="3.7"/><circle cx="1119.1" cy="491.3" r="3.7"/><circle cx="1132.6" cy="491.0" r="3.7"/><circle cx="1146.1" cy="490.6" r="3.7"/><circle cx="1159.6" cy="490.0" r="3.7"/><circle cx="1173.1" cy="490.0" r="3.7"/><circle cx="1186.6" cy="490.0" r="3.7"/><circle cx="1200.0" cy="489.7" r="3.7"/><circle cx="1213.5" cy="489.1" r="3.7"/><circle cx="1227.0" cy="488.2" r="3.7"/><circle cx="1240.5" cy="485.3" r="3.7"/><circle cx="1254.0" cy="482.5" r="3.7"/><circle cx="1267.5" cy="480.7" r="3.7"/><circle cx="1281.0" cy="479.9" r="3.7"/><circle cx="1294.5" cy="479.5" r="3.7"/><circle cx="1308.0" cy="478.2" r="3.7"/><circle cx="1321.5" cy="477.7" r="3.7"/><circle cx="1334.9" cy="477.5" r="3.7"/><circle cx="1348.4" cy="477.0" r="3.7"/><circle cx="1361.9" cy="477.0" r="3.7"/><circle cx="1375.4" cy="476.4" r="3.7"/><circle cx="1388.9" cy="476.0" r="3.7"/><circle cx="1402.4" cy="475.2" r="3.7"/><circle cx="1415.9" cy="474.0" r="3.7"/><circle cx="1429.4" cy="473.2" r="3.7"/><circle cx="1442.9" cy="473.2" r="3.7"/><circle cx="1456.4" cy="473.2" r="3.7"/><circle cx="1469.8" cy="472.7" r="3.7"/><circle cx="1483.3" cy="472.7" r="3.7"/><circle cx="1496.8" cy="471.5" r="3.7"/><circle cx="1510.3" cy="468.5" r="3.7"/><circle cx="1523.8" cy="468.5" r="3.7"/><circle cx="1537.3" cy="460.8" r="3.7"/><circle cx="1550.8" cy="419.3" r="3.7"/><circle cx="1564.3" cy="374.4" r="3.7"/><circle cx="1577.8" cy="357.4" r="3.7"/><circle cx="1591.3" cy="357.4" r="3.7"/></g>
</g>
<text x="1607" y="633.7" font-family="Liberation Sans" font-size="12" fill="#333">0</text>
<text x="1607" y="579.1" font-family="Liberation Sans" font-size="12" fill="#333">2000</text>
<text x="1607" y="524.6" font-family="Liberation Sans" font-size="12" fill="#333">4000</text>
<text x="1607" y="470.0" font-family="Liberation Sans" font-size="12" fill="#333">6000</text>
<text x="1607" y="415.5" font-family="Liberation Sans" font-size="12" fill="#333">8000</text>
<text x="1607" y="360.9" font-family="Liberation Sans" font-size="12" fill="#333">10000</text>
<text x="1607" y="306.3" font-family="Liberation Sans" font-size="12" fill="#333">12000</text>
<text transform="translate(381.4,639.2) rotate(-90)" text-anchor="end" font-family="Liberation Sans" font-size="12" fill="#888">06 09:38</text>
<text transform="translate(516.3,639.2) rotate(-90)" text-anchor="end" font-family="Liberation Sans" font-size="12" fill="#888">06 05:34</text>
<text transform="translate(651.2,639.2) rotate(-90)" text-anchor="end" font-family="Liberation Sans" font-size="12" fill="#888">06 03:30</text>
<text transform="translate(786.1,639.2) rotate(-90)" text-anchor="end" font-family="Liberation Sans" font-size="12" fill="#888">06 01:42</text>
<text transform="translate(921.0,639.2) rotate(-90)" text-anchor="end" font-family="Liberation Sans" font-size="12" fill="#888">06 13:48</text>
<text transform="translate(1055.9,639.2) rotate(-90)" text-anchor="end" font-family="Liberation Sans" font-size="12" fill="#888">06 14:20</text>
<text transform="translate(1190.8,639.2) rotate(-90)" text-anchor="end" font-family="Liberation Sans" font-size="12" fill="#888">06 12:24</text>
<text transform="translate(1325.7,639.2) rotate(-90)" text-anchor="end" font-family="Liberation Sans" font-size="12" fill="#888">06 12:28</text>
<text transform="translate(1460.6,639.2) rotate(-90)" text-anchor="end" font-family="Liberation Sans" font-size="12" fill="#888">06 11:26</text>
<text transform="translate(1595.5,639.2) rotate(-90)" text-anchor="end" font-family="Liberation Sans" font-size="12" fill="#888">06 10:34</text>
<rect x="1650" y="448.0" width="11" height="11" fill="#ff6a10"/>
<text x="1667" y="458.0" font-family="Liberation Sans" font-size="12" fill="#333">Duration (sec)</text>
<rect x="1650" y="462.0" width="11" height="11" fill="#ff0000"/>
<text x="1667" y="472.0" font-family="Liberation Sans" font-size="12" fill="#333">Errors</text>
<rect x="1650" y="476.0" width="11" height="11" fill="#555555"/>
<text x="1667" y="486.0" font-family="Liberation Sans" font-size="12" fill="#333">Processed</text>
<rect x="1650" y="490.0" width="11" height="11" fill="#00ff00"/>
<text x="1667" y="500.0" font-family="Liberation Sans" font-size="12" fill="#333">Generated</text>
<rect x="1650" y="504.0" width="11" height="11" fill="#58fbbf"/>
<text x="1667" y="514.0" font-family="Liberation Sans" font-size="12" fill="#333">Emails</text>
<rect x="1650" y="518.0" width="11" height="11" fill="#5cfd8a"/>
<text x="1667" y="528.0" font-family="Liberation Sans" font-size="12" fill="#333">Web</text>
</svg><div style="position:absolute;left:248px;top:727px;width:82px;height:38px;background:#e9e9eb;border-radius:3px"></div><div style="position:absolute;left:289.0px;transform:translateX(-50%);top:735.5px;height:19px;line-height:19px;font-size:14.6px;color:#1b264f;font-weight:400;white-space:nowrap;">Previous</div><div style="position:absolute;left:336px;top:727px;width:35px;height:38px;background:#1b264f;border-radius:3px"></div><div style="position:absolute;left:353.5px;transform:translateX(-50%);top:735.5px;height:19px;line-height:19px;font-size:14.6px;color:#fff;font-weight:400;white-space:nowrap;">1</div><div style="position:absolute;left:377px;top:727px;width:34px;height:38px;background:#fff;border:1px solid #e1e1e3;border-radius:3px;box-sizing:border-box"></div><div style="position:absolute;left:394.0px;transform:translateX(-50%);top:735.5px;height:19px;line-height:19px;font-size:14.6px;color:#1b264f;font-weight:400;white-space:nowrap;">2</div><div style="position:absolute;left:418px;top:727px;width:34px;height:38px;background:#fff;border:1px solid #e1e1e3;border-radius:3px;box-sizing:border-box"></div><div style="position:absolute;left:435.0px;transform:translateX(-50%);top:735.5px;height:19px;line-height:19px;font-size:14.6px;color:#1b264f;font-weight:400;white-space:nowrap;">3</div><div style="position:absolute;left:459px;top:727px;width:34px;height:38px;background:#fff;border:1px solid #e1e1e3;border-radius:3px;box-sizing:border-box"></div><div style="position:absolute;left:476.0px;transform:translateX(-50%);top:735.5px;height:19px;line-height:19px;font-size:14.6px;color:#1b264f;font-weight:400;white-space:nowrap;">4</div><div style="position:absolute;left:499px;top:727px;width:34px;height:38px;background:#fff;border:1px solid #e1e1e3;border-radius:3px;box-sizing:border-box"></div><div style="position:absolute;left:516.0px;transform:translateX(-50%);top:735.5px;height:19px;line-height:19px;font-size:14.6px;color:#1b264f;font-weight:400;white-space:nowrap;">5</div><div style="position:absolute;left:540px;top:727px;width:34px;height:38px;background:#fff;border:1px solid #e1e1e3;border-radius:3px;box-sizing:border-box"></div><div style="position:absolute;left:557.0px;transform:translateX(-50%);top:735.5px;height:19px;line-height:19px;font-size:14.6px;color:#1b264f;font-weight:400;white-space:nowrap;">6</div><div style="position:absolute;left:581px;top:727px;width:34px;height:38px;background:#fff;border:1px solid #e1e1e3;border-radius:3px;box-sizing:border-box"></div><div style="position:absolute;left:598.0px;transform:translateX(-50%);top:735.5px;height:19px;line-height:19px;font-size:14.6px;color:#1b264f;font-weight:400;white-space:nowrap;">7</div><div style="position:absolute;left:621px;top:727px;width:35px;height:38px;background:#fff;border:1px solid #e1e1e3;border-radius:3px;box-sizing:border-box"></div><div style="position:absolute;left:638.5px;transform:translateX(-50%);top:735.5px;height:19px;line-height:19px;font-size:14.6px;color:#1b264f;font-weight:400;white-space:nowrap;">8</div><div style="position:absolute;left:662px;top:727px;width:34px;height:38px;background:#fff;border:1px solid #e1e1e3;border-radius:3px;box-sizing:border-box"></div><div style="position:absolute;left:679.0px;transform:translateX(-50%);top:735.5px;height:19px;line-height:19px;font-size:14.6px;color:#1b264f;font-weight:400;white-space:nowrap;">9</div><div style="position:absolute;left:703px;top:727px;width:43px;height:38px;background:#fff;border:1px solid #e1e1e3;border-radius:3px;box-sizing:border-box"></div><div style="position:absolute;left:724.5px;transform:translateX(-50%);top:735.5px;height:19px;line-height:19px;font-size:14.6px;color:#1b264f;font-weight:400;white-space:nowrap;">10</div><div style="position:absolute;left:752px;top:727px;width:36px;height:38px;background:#fff;border:1px solid #e1e1e3;border-radius:3px;box-sizing:border-box"></div><div style="position:absolute;left:770.0px;transform:translateX(-50%);top:735.5px;height:19px;line-height:19px;font-size:14.6px;color:#1b264f;font-weight:400;white-space:nowrap;">...</div><div style="position:absolute;left:795px;top:727px;width:53px;height:38px;background:#fff;border:1px solid #e1e1e3;border-radius:3px;box-sizing:border-box"></div><div style="position:absolute;left:821.5px;transform:translateX(-50%);top:735.5px;height:19px;line-height:19px;font-size:14.6px;color:#1b264f;font-weight:400;white-space:nowrap;">Last</div><div style="position:absolute;left:854px;top:727px;width:58px;height:38px;background:#e9e9eb;border-radius:3px"></div><div style="position:absolute;left:883.0px;transform:translateX(-50%);top:735.5px;height:19px;line-height:19px;font-size:14.6px;color:#1b264f;font-weight:400;white-space:nowrap;">Next</div><div style="position:absolute;left:1417px;top:739.0px;height:18px;line-height:18px;font-size:14.1px;color:#111;font-weight:400;white-space:nowrap;">Records per page</div><div style="position:absolute;left:1537px;top:732px;width:61px;height:33px;background:#fff;border:1px solid #d8d8da;box-sizing:border-box"></div><div style="position:absolute;left:1545px;top:738.5px;height:19px;line-height:19px;font-size:14.6px;color:#555;font-weight:400;white-space:nowrap;">100</div><div style="position:absolute;left:1606px;top:738.0px;height:20px;line-height:20px;font-size:15.4px;color:#111;font-weight:400;white-space:nowrap;">from 1 to 100 of 1535</div><div style="position:absolute;left:228px;top:806px;width:1545px;height:494px;background:#fff;border-radius:3px;box-shadow:0 1px 1px rgba(0,0,0,0.12)"></div><div style="position:absolute;left:244px;top:822.0px;height:18px;line-height:18px;font-size:13.5px;color:#000;font-weight:700;white-space:nowrap;">Change set processing log</div><div style="position:absolute;left:244px;top:842.5px;height:17px;line-height:17px;font-size:12.9px;color:#555;font-weight:400;white-space:nowrap;">Hierarchical log entries that show change set processing details with drill-down navigation from high-level tasks to batch-level entries and subscription processing metrics</div><div style="position:absolute;right:46px;top:832.5px;height:19px;line-height:19px;font-size:14.4px;color:#111;font-weight:400;white-space:nowrap;">Log level: task</div><div style="position:absolute;left:228px;top:880px;width:1545px;height:1px;background:#e9e9eb"></div><div style="position:absolute;left:244px;top:897px;width:1513px;height:403px;background:#fff;border:1px solid #c9c9cb;box-sizing:border-box"></div><div style="position:absolute;left:244px;top:948px;width:1513px;height:1px;background:#e9e9eb"></div><div style="position:absolute;left:244px;top:1001px;width:1513px;height:1px;background:#e9e9eb"></div><div style="position:absolute;left:244px;top:1054px;width:1513px;height:1px;background:#e9e9eb"></div><div style="position:absolute;left:244px;top:1107px;width:1513px;height:1px;background:#e9e9eb"></div><div style="position:absolute;left:244px;top:1160px;width:1513px;height:1px;background:#e9e9eb"></div><div style="position:absolute;left:261px;top:913px;width:20px;height:20px;background:#fff;border:1px solid #bbb;border-radius:3px;box-sizing:border-box"></div><svg style="position:absolute;left:262px;top:914px" width="18" height="18" viewBox="0 0 18 18"><path d="M4.3,8.8L7.6,12L14.6,4.6" fill="none" stroke="#1b264f" stroke-width="2"/></svg><div style="position:absolute;left:302px;top:913.5px;height:17px;line-height:17px;font-size:13px;color:#1b264f;font-weight:700;white-space:nowrap;">Name</div><div style="position:absolute;left:534px;top:913.5px;height:17px;line-height:17px;font-size:13px;color:#444;font-weight:700;white-space:nowrap;">Duration (sec)</div><div style="position:absolute;left:711px;top:913.5px;height:17px;line-height:17px;font-size:13px;color:#444;font-weight:700;white-space:nowrap;">Errors</div><div style="position:absolute;left:888px;top:913.5px;height:17px;line-height:17px;font-size:13px;color:#444;font-weight:700;white-space:nowrap;">Processed</div><div style="position:absolute;left:1065px;top:913.5px;height:17px;line-height:17px;font-size:13px;color:#444;font-weight:700;white-space:nowrap;">Generated</div><div style="position:absolute;left:1242px;top:913.5px;height:17px;line-height:17px;font-size:13px;color:#444;font-weight:700;white-space:nowrap;">Type</div><div style="position:absolute;left:1419px;top:913.5px;height:17px;line-height:17px;font-size:13px;color:#444;font-weight:700;white-space:nowrap;">Started</div><div style="position:absolute;left:1596px;top:913.5px;height:17px;line-height:17px;font-size:13px;color:#444;font-weight:700;white-space:nowrap;">Entry No.</div><svg style="position:absolute;left:1136px;top:918px" width="10" height="8"><path d="M0.5,1.5H9.5L5,7Z" fill="#444"/></svg><svg style="position:absolute;left:264px;top:966px" width="18" height="18"><circle cx="9" cy="9" r="6.7" fill="none" stroke="#2a3050" stroke-width="1.1" stroke-dasharray="2 1.5"/></svg><div style="position:absolute;left:302px;top:965.0px;height:18px;line-height:18px;font-size:14px;color:#1b264f;font-weight:700;white-space:nowrap;">06 10:34</div><div style="position:absolute;left:533px;top:965.0px;height:18px;line-height:18px;font-size:14px;color:#777;font-weight:400;white-space:nowrap;">262.02s</div><div style="position:absolute;left:710px;top:965.0px;height:18px;line-height:18px;font-size:14px;color:#777;font-weight:400;white-space:nowrap;">0</div><div style="position:absolute;left:887px;top:965.0px;height:18px;line-height:18px;font-size:14px;color:#777;font-weight:400;white-space:nowrap;">10000</div><div style="position:absolute;left:1064px;top:965.0px;height:18px;line-height:18px;font-size:14px;color:#777;font-weight:400;white-space:nowrap;">9999</div><div style="position:absolute;left:1241px;top:965.0px;height:18px;line-height:18px;font-size:14px;color:#777;font-weight:400;white-space:nowrap;">task</div><div style="position:absolute;left:1418px;top:965.0px;height:18px;line-height:18px;font-size:14px;color:#777;font-weight:400;white-space:nowrap;">2025-10-06 10:34:03</div><div style="position:absolute;left:1595px;top:965.0px;height:18px;line-height:18px;font-size:14px;color:#777;font-weight:400;white-space:nowrap;">001</div><svg style="position:absolute;left:264px;top:1019px" width="18" height="18"><circle cx="9" cy="9" r="6.7" fill="none" stroke="#2a3050" stroke-width="1.1" stroke-dasharray="2 1.5"/></svg><div style="position:absolute;left:302px;top:1018.0px;height:18px;line-height:18px;font-size:14px;color:#1b264f;font-weight:700;white-space:nowrap;">06 11:08</div><div style="position:absolute;left:533px;top:1018.0px;height:18px;line-height:18px;font-size:14px;color:#777;font-weight:400;white-space:nowrap;">189.58s</div><div style="position:absolute;left:710px;top:1018.0px;height:18px;line-height:18px;font-size:14px;color:#777;font-weight:400;white-space:nowrap;">0</div><div style="position:absolute;left:887px;top:1018.0px;height:18px;line-height:18px;font-size:14px;color:#777;font-weight:400;white-space:nowrap;">10000</div><div style="position:absolute;left:1064px;top:1018.0px;height:18px;line-height:18px;font-size:14px;color:#777;font-weight:400;white-space:nowrap;">9999</div><div style="position:absolute;left:1241px;top:1018.0px;height:18px;line-height:18px;font-size:14px;color:#777;font-weight:400;white-space:nowrap;">task</div><div style="position:absolute;left:1418px;top:1018.0px;height:18px;line-height:18px;font-size:14px;color:#777;font-weight:400;white-space:nowrap;">2025-10-06 11:08:07</div><div style="position:absolute;left:1595px;top:1018.0px;height:18px;line-height:18px;font-size:14px;color:#777;font-weight:400;white-space:nowrap;">002</div><svg style="position:absolute;left:264px;top:1072px" width="18" height="18"><circle cx="9" cy="9" r="6.7" fill="none" stroke="#2a3050" stroke-width="1.1" stroke-dasharray="2 1.5"/></svg><div style="position:absolute;left:302px;top:1071.0px;height:18px;line-height:18px;font-size:14px;color:#1b264f;font-weight:700;white-space:nowrap;">06 10:18</div><div style="position:absolute;left:533px;top:1071.0px;height:18px;line-height:18px;font-size:14px;color:#777;font-weight:400;white-space:nowrap;">660.22s</div><div style="position:absolute;left:710px;top:1071.0px;height:18px;line-height:18px;font-size:14px;color:#777;font-weight:400;white-space:nowrap;">0</div><div style="position:absolute;left:887px;top:1071.0px;height:18px;line-height:18px;font-size:14px;color:#777;font-weight:400;white-space:nowrap;">9380</div><div style="position:absolute;left:1064px;top:1071.0px;height:18px;line-height:18px;font-size:14px;color:#777;font-weight:400;white-space:nowrap;">9378</div><div style="position:absolute;left:1241px;top:1071.0px;height:18px;line-height:18px;font-size:14px;color:#777;font-weight:400;white-space:nowrap;">task</div><div style="position:absolute;left:1418px;top:1071.0px;height:18px;line-height:18px;font-size:14px;color:#777;font-weight:400;white-space:nowrap;">2025-10-06 10:18:03</div><div style="position:absolute;left:1595px;top:1071.0px;height:18px;line-height:18px;font-size:14px;color:#777;font-weight:400;white-space:nowrap;">003</div><svg style="position:absolute;left:264px;top:1125px" width="18" height="18"><circle cx="9" cy="9" r="6.7" fill="none" stroke="#2a3050" stroke-width="1.1" stroke-dasharray="2 1.5"/></svg><div style="position:absolute;left:302px;top:1124.0px;height:18px;line-height:18px;font-size:14px;color:#1b264f;font-weight:700;white-space:nowrap;">06 11:14</div><div style="position:absolute;left:533px;top:1124.0px;height:18px;line-height:18px;font-size:14px;color:#777;font-weight:400;white-space:nowrap;">164.28s</div><div style="position:absolute;left:710px;top:1124.0px;height:18px;line-height:18px;font-size:14px;color:#777;font-weight:400;white-space:nowrap;">0</div><div style="position:absolute;left:887px;top:1124.0px;height:18px;line-height:18px;font-size:14px;color:#777;font-weight:400;white-space:nowrap;">7724</div><div style="position:absolute;left:1064px;top:1124.0px;height:18px;line-height:18px;font-size:14px;color:#777;font-weight:400;white-space:nowrap;">7731</div><div style="position:absolute;left:1241px;top:1124.0px;height:18px;line-height:18px;font-size:14px;color:#777;font-weight:400;white-space:nowrap;">task</div><div style="position:absolute;left:1418px;top:1124.0px;height:18px;line-height:18px;font-size:14px;color:#777;font-weight:400;white-space:nowrap;">2025-10-06 11:14:08</div><div style="position:absolute;left:1595px;top:1124.0px;height:18px;line-height:18px;font-size:14px;color:#777;font-weight:400;white-space:nowrap;">004</div><svg style="position:absolute;left:264px;top:1178px" width="18" height="18"><circle cx="9" cy="9" r="6.7" fill="none" stroke="#2a3050" stroke-width="1.1" stroke-dasharray="2 1.5"/></svg><div style="position:absolute;left:302px;top:1177.0px;height:18px;line-height:18px;font-size:14px;color:#1b264f;font-weight:700;white-space:nowrap;">06 10:40</div><div style="position:absolute;left:533px;top:1177.0px;height:18px;line-height:18px;font-size:14px;color:#777;font-weight:400;white-space:nowrap;">124.98s</div><div style="position:absolute;left:710px;top:1177.0px;height:18px;line-height:18px;font-size:14px;color:#777;font-weight:400;white-space:nowrap;">0</div><div style="position:absolute;left:887px;top:1177.0px;height:18px;line-height:18px;font-size:14px;color:#777;font-weight:400;white-space:nowrap;">6224</div><div style="position:absolute;left:1064px;top:1177.0px;height:18px;line-height:18px;font-size:14px;color:#777;font-weight:400;white-space:nowrap;">6208</div><div style="position:absolute;left:1241px;top:1177.0px;height:18px;line-height:18px;font-size:14px;color:#777;font-weight:400;white-space:nowrap;">task</div><div style="position:absolute;left:1418px;top:1177.0px;height:18px;line-height:18px;font-size:14px;color:#777;font-weight:400;white-space:nowrap;">2025-10-06 10:40:03</div><div style="position:absolute;left:1595px;top:1177.0px;height:18px;line-height:18px;font-size:14px;color:#777;font-weight:400;white-space:nowrap;">005</div><div style="position:absolute;left:1793px;top:69px;width:10px;height:1136px;background:#fafafa"></div><div style="position:absolute;left:1796px;top:73px;width:7px;height:205px;background:#8a8a8a;border-radius:4px 0 0 4px"></div><svg style="position:absolute;left:1795px;top:1197px" width="8" height="8"><path d="M0,0H8V8Z" fill="#777"/></svg>
</body></html>
